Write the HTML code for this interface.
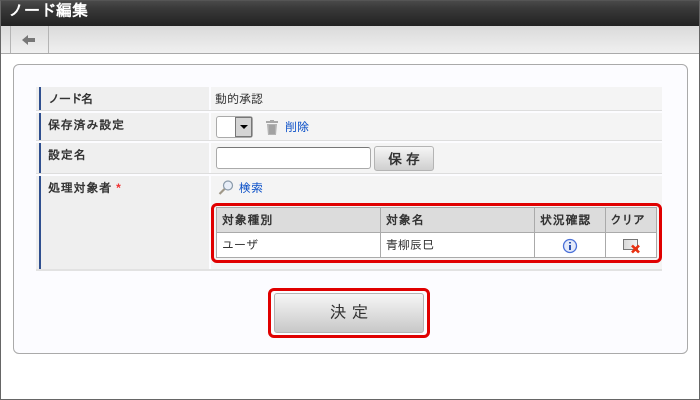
<!DOCTYPE html>
<html lang="ja"><head><meta charset="utf-8"><style>
html,body{margin:0;padding:0}
body{width:700px;height:400px;position:relative;overflow:hidden;background:#fff;font:12px/14px "Liberation Sans","WenQuanYi Zen Hei","IPAGothic",sans-serif;color:#333}
div,span,svg{position:absolute;box-sizing:border-box;white-space:nowrap}
.lb{left:36px;width:173px;background:#efefef}
.lb:before{content:"";position:absolute;left:3px;top:0;bottom:0;width:2px;background:#2f4f8f}
.val{left:211px;width:451px;background:#f4f4f4}
.t{font-weight:bold;letter-spacing:.8px}
.lk{color:#0b50c8}
.th{background:#dcdcdc;top:208px;height:24px;font-weight:bold;line-height:24px;padding-left:5px;letter-spacing:.8px}
.v{background:#aaa;width:1px;top:207px;height:51px}
</style></head><body>
<div style="left:0;top:0;width:700px;height:26px;background:linear-gradient(#4c4c4c,#3a3a3a 30%,#222)"></div>
<div style="left:8px;top:3px;color:#fff;font-size:16px;line-height:18px;font-weight:bold">ノード編集</div>
<div style="left:0;top:26px;width:700px;height:28px;background:linear-gradient(#dadada,#f0f0f0);border-bottom:1px solid #aaa"></div>
<div style="left:10px;top:26px;width:1px;height:27px;background:#b4b4b4"></div>
<div style="left:48px;top:26px;width:1px;height:27px;background:#b4b4b4"></div>
<svg style="left:22px;top:34px" width="14" height="12" viewBox="0 0 14 12"><path d="M0 6L6 1V4H13V8H6V11Z" fill="#777"/></svg>
<div style="left:0;top:0;width:700px;height:400px;border:1px solid #666;border-top-color:#555"></div>

<div style="left:13px;top:64px;width:675px;height:290px;border:1px solid #aaa;border-radius:6px;background:#fcfcff"></div>

<div class="lb" style="top:87px;height:23px"></div><div class="val" style="top:87px;height:23px"></div>
<div style="left:36px;top:110px;width:626px;height:1px;background:#ddd"></div>
<div class="lb" style="top:113px;height:27px"></div><div class="val" style="top:113px;height:27px"></div>
<div style="left:36px;top:140px;width:626px;height:1px;background:#ddd"></div>
<div class="lb" style="top:143px;height:30px"></div><div class="val" style="top:143px;height:30px"></div>
<div style="left:36px;top:173px;width:626px;height:1px;background:#ddd"></div>
<div class="lb" style="top:176px;height:93px"></div><div class="val" style="top:176px;height:93px"></div>
<div style="left:36px;top:269px;width:626px;height:2px;background:#e2e2e2"></div>

<div class="t" style="left:48px;top:92px;letter-spacing:-1px">ノード名</div>
<div class="t" style="left:48px;top:118px">保存済み設定</div>
<div class="t" style="left:48px;top:148px">設定名</div>
<div class="t" style="left:48px;top:181px">処理対象者 <span style="position:static;color:#f03030">*</span></div>

<div style="left:215px;top:92px">動的承認</div>

<div style="left:216px;top:116px;width:37px;height:22px;background:#fff;border:1px solid #aaa;border-radius:3px"></div>
<div style="left:235px;top:117px;width:17px;height:20px;background:#d4d4d4;border:1px solid #777"></div>
<svg style="left:240px;top:125px" width="8" height="4" viewBox="0 0 8 4"><path d="M0 0H8L4 4Z" fill="#000"/></svg>
<svg style="left:265px;top:120px" width="14" height="15" viewBox="0 0 14 15"><path d="M5 0H9V1H13V3H1V1H5Z" fill="#a8a8a8"/><path d="M2 4H12L11 15H3Z" fill="#b4b4b4"/><path d="M5 5V14M7 5V14M9 5V14" stroke="#909090"/></svg>
<div class="lk" style="left:285px;top:120px">削除</div>

<div style="left:216px;top:147px;width:155px;height:22px;background:#fff;border:1px solid #aaa;border-top-color:#777;border-radius:3px"></div>
<div style="left:374px;top:146px;width:60px;height:25px;background:linear-gradient(#f6f6f6,#cfcfcf);border:1px solid #b4b4b4;border-radius:3px;text-align:center;line-height:24px;font-size:14px;font-weight:bold;color:#333">保 存</div>

<svg style="left:218px;top:180px" width="16" height="15" viewBox="0 0 16 15"><circle cx="10" cy="5.500" r="4.500" fill="#e8eef8" stroke="#8a9aaa" stroke-width="1.200"/><path d="M6.500 9L1.500 14" stroke="#a09888" stroke-width="2.200"/></svg>
<div class="lk" style="left:239px;top:181px">検索</div>

<div style="left:216px;top:207px;width:441px;height:51px;background:#aaa"></div>
<div class="th" style="left:217px;width:163px">対象種別</div>
<div class="th" style="left:381px;width:153px">対象名</div>
<div class="th" style="left:535px;width:70px">状況確認</div>
<div class="th" style="left:606px;width:50px;padding-left:4px;letter-spacing:-.5px">クリア</div>
<div style="left:217px;top:233px;width:439px;height:24px;background:#fff"></div>
<div class="v" style="left:380px"></div><div class="v" style="left:534px"></div><div class="v" style="left:605px"></div>
<div style="left:222px;top:238px">ユーザ</div>
<div style="left:386px;top:238px">青柳辰巳</div>
<svg style="left:562px;top:238px" width="16" height="16" viewBox="0 0 16 16"><circle cx="8" cy="8" r="6.500" fill="#e4eafa" stroke="#4a70d8" stroke-width="1.300"/><path d="M8 4V5.500M8 7V12" stroke="#2a50b0" stroke-width="2"/></svg>
<svg style="left:623px;top:239px" width="18" height="15" viewBox="0 0 18 15"><defs><linearGradient id="g" x1="0" x2="1"><stop offset="0" stop-color="#d8d8d8"/><stop offset="1" stop-color="#f4f4f4"/></linearGradient></defs><rect x="0.500" y="0.500" width="14" height="10" fill="url(#g)" stroke="#777"/><path d="M9 6.500L16 13.500M16 6.500L9 13.500" stroke="#e83010" stroke-width="2.600"/></svg>
<div style="left:211px;top:203px;width:451px;height:60px;border:3px solid #e00000;border-radius:6px"></div>

<div style="left:274px;top:293px;width:150px;height:40px;background:linear-gradient(#f6f6f6,#c8c8c8);border:1px solid #b4b4b4;border-radius:3px;text-align:center;line-height:37px;font-size:17px;color:#333">決 定</div>
<div style="left:268px;top:288px;width:162px;height:50px;border:3px solid #e00000;border-radius:6px"></div>
</body></html>
